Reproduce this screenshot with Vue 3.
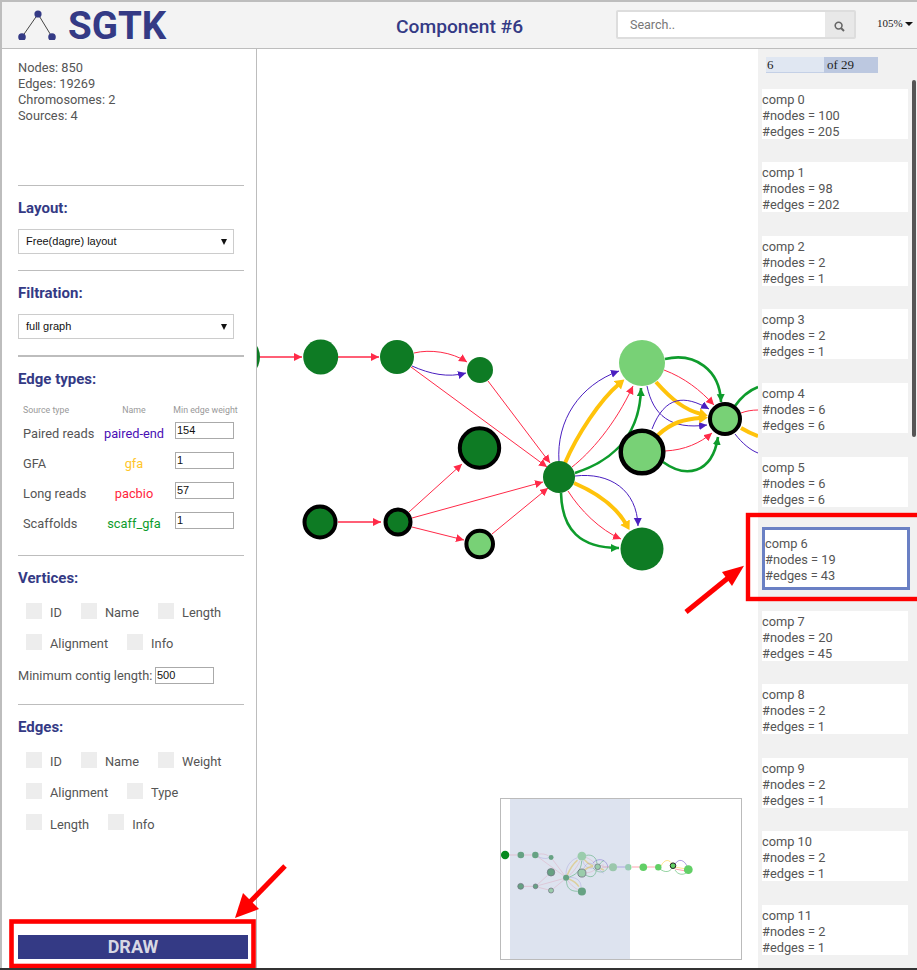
<script setup>
const RED = '#ff2a48', PUR = '#4a1fc0', YEL = '#ffc30b', GRN = '#0e9c2c'
const DARK = '#0e7b24', LIGHT = '#78d176'

const edges = [
  { d: 'M260 357L302 357', c: 'r', w: 1.3 },
  { d: 'M338 357L379 357', c: 'r', w: 1.3 },
  { d: 'M414 353C430 349 452 352 467 362', c: 'r', w: 1 },
  { d: 'M412 366C430 374 448 378 466 373', c: 'p', w: 1 },
  { d: 'M411 367L547 467', c: 'r', w: 1 },
  { d: 'M488 381L550 463', c: 'r', w: 1 },
  { d: 'M338 522L381 522', c: 'r', w: 1.3 },
  { d: 'M409 512L462 464', c: 'r', w: 1 },
  { d: 'M412 518L543 482', c: 'r', w: 1 },
  { d: 'M412 527L464 540', c: 'r', w: 1 },
  { d: 'M492 534L548 488', c: 'r', w: 1 },
  { d: 'M559 462C556 420 580 385 619 371', c: 'p', w: 1 },
  { d: 'M565 463C577 435 600 400 619 384', c: 'y', w: 4 },
  { d: 'M572 467C590 453 615 425 633 386', c: 'r', w: 1 },
  { d: 'M575 473C600 465 640 445 641 388', c: 'g', w: 2.6 },
  { d: 'M575 476C610 472 637 490 638 526', c: 'p', w: 1 },
  { d: 'M574 483C595 492 615 505 626 524', c: 'y', w: 4 },
  { d: 'M568 491C580 510 600 530 621 539', c: 'r', w: 1 },
  { d: 'M561 493C562 530 580 548 619 548', c: 'g', w: 2.6 },
  { d: 'M665 359C695 352 720 370 721 402', c: 'g', w: 2.6 },
  { d: 'M664 370C685 378 700 390 714 405', c: 'r', w: 1 },
  { d: 'M656 382C672 400 685 410 701 414', c: 'y', w: 4 },
  { d: 'M647 386C653 415 670 430 707 425', c: 'p', w: 1 },
  { d: 'M652 429C665 395 685 395 709 409', c: 'p', w: 1 },
  { d: 'M658 435C672 422 685 419 701 418', c: 'y', w: 4 },
  { d: 'M665 451C685 450 700 443 712 433', c: 'r', w: 1 },
  { d: 'M663 462C685 478 712 475 718 437', c: 'g', w: 2.6 },
  { d: 'M735 406C742 396 750 390 758 387', c: 'g', w: 2.6, open: true },
  { d: 'M741 413C746 411 752 410 758 410', c: 'r', w: 1, open: true },
  { d: 'M741 428C746 431 752 434 758 436', c: 'y', w: 4, open: true },
  { d: 'M735 434C742 443 750 450 758 453', c: 'p', w: 1, open: true }
]
const colors = { r: RED, p: PUR, y: YEL, g: GRN }

const nodes = [
  { x: 238, y: 357, r: 22, f: DARK },
  { x: 320.7, y: 357, r: 17.5, f: DARK },
  { x: 397, y: 357, r: 17, f: DARK },
  { x: 480, y: 370, r: 13, f: DARK },
  { x: 479.5, y: 448, r: 19.7, f: DARK, s: 4 },
  { x: 320, y: 522, r: 15.5, f: DARK, s: 4 },
  { x: 398, y: 522, r: 12.5, f: DARK, s: 4 },
  { x: 479.7, y: 544, r: 13.3, f: LIGHT, s: 4 },
  { x: 559, y: 477, r: 16, f: DARK },
  { x: 642, y: 363, r: 23, f: LIGHT },
  { x: 642, y: 452, r: 21.3, f: LIGHT, s: 4.5 },
  { x: 642, y: 549, r: 21.5, f: DARK },
  { x: 725, y: 419, r: 15, f: LIGHT, s: 4 }
]

const miniExtra = [
  { x: 613, y: 867.3, r: 4, f: '#8fd08f' },
  { x: 628.3, y: 867.3, r: 3.2, f: '#8fd8a0' },
  { x: 643.3, y: 867.3, r: 3.8, f: '#62cf66' },
  { x: 658.3, y: 867.3, r: 3.2, f: '#62cf66' },
  { x: 673, y: 865.7, r: 2.8, f: '#62cf66', s: 1 },
  { x: 688.3, y: 869.7, r: 4.4, f: '#62cf66' }
]
const miniLinks = [
  { d: 'M602 867L613 867', c: RED },
  { d: 'M617 867L628 867', c: PUR },
  { d: 'M632 867L643 867', c: RED },
  { d: 'M647 867L658 867', c: RED },
  { d: 'M661 866C665 858 670 860 672 864', c: YEL },
  { d: 'M660 869C665 873 670 872 672 868', c: GRN },
  { d: 'M675 864C679 858 684 860 687 866', c: PUR },
  { d: 'M675 867L686 869', c: YEL },
  { d: 'M675 869L686 871', c: RED },
  { d: 'M675 870C678 875 683 875 686 873', c: GRN },
  { d: 'M608 867C606 858 597 858 593 863', c: PUR },
  { d: 'M608 867C605 874 597 873 593 868', c: GRN }
]

const comps = [
  [0, 100, 205], [1, 98, 202], [2, 2, 1], [3, 2, 1], [4, 6, 6], [5, 6, 6],
  [6, 19, 43], [7, 20, 45], [8, 2, 1], [9, 2, 1], [10, 2, 1], [11, 2, 1]
].map(([id, n, e]) => ({ id, n, e }))

const sources = [
  { type: 'Paired reads', name: 'paired-end', cls: 'pe', v: '154' },
  { type: 'GFA', name: 'gfa', cls: 'gf', v: '1' },
  { type: 'Long reads', name: 'pacbio', cls: 'pb', v: '57' },
  { type: 'Scaffolds', name: 'scaff_gfa', cls: 'sc', v: '1' }
]
const vertexRows = [['ID', 'Name', 'Length'], ['Alignment', 'Info']]
const edgeRows = [['ID', 'Name', 'Weight'], ['Alignment', 'Type'], ['Length', 'Info']]
</script>

<template>
  <div class="page">
    <header class="top">
      <svg class="logo" width="38" height="30" viewBox="18 11 38 30">
        <path d="M22 38L38 15L52 38" fill="none" stroke="#444" stroke-width="1" />
        <circle cx="38" cy="15" r="3.6" fill="#343a85" />
        <circle cx="22" cy="38" r="3.8" fill="#343a85" />
        <circle cx="52" cy="38" r="3.8" fill="#343a85" />
      </svg>
      <div class="brand">SGTK</div>
      <div class="title">Component #6</div>
      <div class="search">
        <span class="ph">Search..</span>
        <span class="sbtn">
          <svg width="11" height="11" viewBox="0 0 11 11">
            <circle cx="4.6" cy="4.6" r="3.4" fill="none" stroke="#666" stroke-width="1.6" />
            <path d="M7 7L10 10" stroke="#666" stroke-width="1.9" />
          </svg>
        </span>
      </div>
      <div class="zoom">105%<i class="caret"></i></div>
    </header>

    <div class="body">
      <aside class="side">
        <div class="stats">
          <div>Nodes: 850</div>
          <div>Edges: 19269</div>
          <div>Chromosomes: 2</div>
          <div>Sources: 4</div>
        </div>
        <hr class="rule first" />
        <h3>Layout:</h3>
        <div class="sel">Free(dagre) layout</div>
        <hr class="rule" />
        <h3>Filtration:</h3>
        <div class="sel">full graph</div>
        <hr class="rule thick" />
        <h3>Edge types:</h3>
        <div class="types">
          <span class="th">Source type</span>
          <span class="th mid">Name</span>
          <span class="th last">Min edge weight</span>
          <template v-for="s in sources" :key="s.name">
            <span class="cell txt">{{ s.type }}</span>
            <span class="cell txt mid" :class="s.cls">{{ s.name }}</span>
            <span class="cell inp"><span class="box">{{ s.v }}</span></span>
          </template>
        </div>
        <hr class="rule after-types" />
        <h3>Vertices:</h3>
        <div class="checks">
          <div v-for="(row, i) in vertexRows" :key="i" class="crow">
            <label v-for="t in row" :key="t" class="chk"><i></i>{{ t }}</label>
          </div>
        </div>
        <div class="minlen"><span class="minlbl">Minimum contig length:</span><span class="box">500</span></div>
        <hr class="rule after-min" />
        <h3>Edges:</h3>
        <div class="checks">
          <div v-for="(row, i) in edgeRows" :key="i" class="crow">
            <label v-for="t in row" :key="t" class="chk"><i></i>{{ t }}</label>
          </div>
        </div>
        <button class="draw">DRAW</button>
      </aside>

      <main class="canvas">
        <svg class="graph" width="501" height="919" viewBox="257 49 501 919">
          <defs>
            <marker id="ar" markerUnits="userSpaceOnUse" markerWidth="10" markerHeight="10" refX="8" refY="4" orient="auto"><path d="M0 0L8 4L0 8Z" :fill="RED" /></marker>
            <marker id="ap" markerUnits="userSpaceOnUse" markerWidth="10" markerHeight="10" refX="8" refY="4" orient="auto"><path d="M0 0L8 4L0 8Z" :fill="PUR" /></marker>
            <marker id="ag" markerUnits="userSpaceOnUse" markerWidth="10" markerHeight="10" refX="8" refY="4" orient="auto"><path d="M0 0L8 4L0 8Z" :fill="GRN" /></marker>
            <marker id="ay" markerUnits="userSpaceOnUse" markerWidth="12" markerHeight="12" refX="2" refY="5.5" orient="auto"><path d="M0 0L9 5.5L0 11Z" :fill="YEL" /></marker>
          </defs>
          <path v-for="(e, i) in edges" :key="i" :d="e.d" fill="none" :stroke="colors[e.c]" :stroke-width="e.w" :marker-end="e.open ? null : `url(#a${e.c})`" />
          <circle v-for="(n, i) in nodes" :key="i" :cx="n.x" :cy="n.y" :r="n.r" :fill="n.f" :stroke="n.s ? '#000' : 'none'" :stroke-width="n.s || 0" />
        </svg>

        <svg class="mini" width="242" height="162" viewBox="500 798 242 162">
          <g transform="translate(520.7 855) scale(.19) translate(-320 -357)">
            <path v-for="(e, i) in edges" :key="i" :d="e.d" fill="none" :stroke="colors[e.c]" :stroke-width="e.w * 2" opacity=".55" />
            <circle v-for="(n, i) in nodes" :key="i" :cx="n.x" :cy="n.y" :r="n.r" :fill="i === 0 ? '#078a1f' : n.f" :stroke="n.s ? '#222' : 'none'" :stroke-width="n.s ? n.s : 0" :opacity="i === 0 ? 1 : .82" />
          </g>
          <path v-for="(l, i) in miniLinks" :key="'l' + i" :d="l.d" fill="none" :stroke="l.c" stroke-width=".8" opacity=".55" />
          <circle v-for="(n, i) in miniExtra" :key="'x' + i" :cx="n.x" :cy="n.y" :r="n.r" :fill="n.f" :stroke="n.s ? '#222' : 'none'" :stroke-width="n.s || 0" />
          <rect x="510" y="798" width="120" height="162" fill="#aab9d8" opacity=".4" />
          <rect x="500.5" y="798.5" width="241" height="161" fill="none" stroke="#bbb" stroke-width="1" />
        </svg>
      </main>

      <section class="panel">
        <div class="pager"><span class="pg-in">6</span><span class="pg-of">of 29</span></div>
        <div class="list">
          <div v-for="c in comps" :key="c.id" class="comp" :class="{ on: c.id === 6 }">
            <div>comp {{ c.id }}</div>
            <div>#nodes = {{ c.n }}</div>
            <div>#edges = {{ c.e }}</div>
          </div>
        </div>
        <div class="thumb"></div>
      </section>
    </div>

    <svg class="notes" width="917" height="970" viewBox="0 0 917 970">
      <rect x="11.5" y="921.5" width="242" height="44.5" fill="none" stroke="#ff0000" stroke-width="4.6" />
      <rect x="748" y="515" width="200" height="84" fill="none" stroke="#ff0000" stroke-width="4.4" />
      <path d="M285 866L246 906" stroke="#ff0000" stroke-width="5" />
      <path d="M235 918L243 893L259 909Z" fill="#ff0000" />
      <path d="M686 612L728 578" stroke="#ff0000" stroke-width="5" />
      <path d="M744 565.7L722 572L732 586Z" fill="#ff0000" />
    </svg>
  </div>
</template>

<style>
html, body { margin: 0; background: #fff; }
</style>

<style scoped>
.page {
  position: relative;
  box-sizing: border-box;
  width: 917px;
  height: 970px;
  overflow: hidden;
  display: flex;
  flex-direction: column;
  border-top: 2px solid #bdbdbd;
  border-bottom: 2px solid #333;
  font-family: Roboto, sans-serif;
  font-size: 12.8px;
  line-height: 16px;
  color: #555;
  background: #fff;
}
.top {
  flex: none;
  height: 46px;
  display: flex;
  align-items: center;
  background: #f3f3f3;
  border-bottom: 1px solid #bdbdbd;
  border-left: 2px solid #bdbdbd;
  padding-left: 16px;
}
.logo { flex: none; margin-top: -1px; }
.brand {
  margin-left: 12px;
  width: 328px;
  font-size: 38.5px;
  font-weight: 700;
  line-height: 46px;
  color: #343a85;
  margin-top: 1px;
}
.title {
  width: 220px;
  font-size: 19.2px;
  font-weight: 500;
  color: #343a85;
  margin-top: 3px;
}
.search {
  box-sizing: border-box;
  width: 240px;
  height: 29px;
  border: 2px solid #ddd;
  border-radius: 2px;
  background: #fff;
  display: flex;
  align-items: center;
  justify-content: space-between;
  margin-top: -1px;
}
.ph { margin-left: 12px; color: #777; font-size: 12.5px; }
.sbtn {
  width: 29px;
  height: 25px;
  background: #e8e8e8;
  display: flex;
  align-items: center;
  justify-content: center;
}
.sbtn svg { margin-top: 3px; }
.zoom {
  margin-left: 21px;
  font-family: "Liberation Serif", serif;
  font-size: 11px;
  color: #222;
  display: flex;
  align-items: center;
  margin-top: -4px;
}
.caret {
  margin-left: 2px;
  margin-top: 1px;
  border-left: 4.5px solid transparent;
  border-right: 4.5px solid transparent;
  border-top: 4.5px solid #111;
}
.body { flex: 1; display: flex; min-height: 0; }
.side {
  flex: none;
  box-sizing: border-box;
  width: 257px;
  display: flex;
  flex-direction: column;
  border-left: 2px solid #bdbdbd;
  border-right: 1px solid #bdbdbd;
  padding: 11px 0 9px 16px;
}
.rule { width: 226px; margin: 16px 0 0; border: 0; border-top: 1px solid #bdbdbd; flex: none; }
.rule.first { margin-top: 61px; }
.rule.thick { border-top-width: 2px; }
.rule.after-types { margin-top: 17px; }
.rule.after-min { margin-top: 20px; }
h3 {
  margin: 13px 0 0;
  font-size: 15px;
  font-weight: 700;
  line-height: 18px;
  color: #343a85;
}
.sel {
  position: relative;
  box-sizing: border-box;
  width: 216px;
  height: 25px;
  margin-top: 12px;
  padding-left: 7px;
  border: 1px solid #ccc;
  font-family: "Liberation Sans", sans-serif;
  font-size: 11px;
  line-height: 23px;
  color: #111;
}
.sel::after {
  content: "";
  position: absolute;
  right: 6px;
  top: 9px;
  border-left: 3.5px solid transparent;
  border-right: 3.5px solid transparent;
  border-top: 6px solid #111;
}
.types {
  margin: 16px 0 0 5px;
  display: grid;
  grid-template-columns: 81px 60px 74px;
  grid-auto-rows: 30px;
  grid-template-rows: 14px;
}
.th { font-size: 8.8px; line-height: 12px; color: #999; white-space: nowrap; }
.th.mid { text-align: center; }
.th.last { padding-left: 9px; text-align: center; }
.cell { display: flex; align-items: center; white-space: nowrap; }
.cell.txt { padding-top: 2px; }
.cell.mid { justify-content: center; }
.pe { color: #4a0fb5; }
.gf { color: #ffc62a; }
.pb { color: #ff1f3d; }
.sc { color: #0e9c2c; }
.cell.inp { padding-left: 11px; padding-bottom: 5px; }
.box {
  box-sizing: border-box;
  display: inline-block;
  width: 59px;
  height: 17px;
  padding-left: 1px;
  border: 1px solid #aaa;
  font-family: "Liberation Sans", sans-serif;
  font-size: 11px;
  line-height: 14px;
  color: #111;
}
.checks { margin: 16px 0 0 8px; display: flex; flex-direction: column; gap: 15px; }
.crow { display: flex; height: 16px; }
.chk { display: flex; align-items: flex-start; margin-right: 19px; line-height: 20px; }
.crow:nth-child(3) .chk { line-height: 22px; }
.chk i { width: 16px; height: 16px; margin-right: 8px; background: #ededed; }
.minlen { margin-top: 17px; display: flex; align-items: center; line-height: 15px; }
.minlbl { width: 137px; white-space: nowrap; }
.draw {
  margin-top: auto;
  width: 230px;
  height: 24px;
  border: 0;
  padding: 0 0 2px;
  background: #343a85;
  color: #d8d8e4;
  font-family: Roboto, sans-serif;
  font-size: 18px;
  font-weight: 700;
}
.canvas { position: relative; flex: none; width: 501px; overflow: hidden; }
.graph { display: block; }
.mini { position: absolute; left: 243px; top: 749px; display: block; background: #fff; }
.panel {
  position: relative;
  flex: 1;
  min-width: 0;
  background: #f1f1f1;
  overflow: hidden;
}
.pager {
  display: flex;
  margin: 8px 0 0 8px;
  height: 16px;
  font-family: "Liberation Serif", serif;
  font-size: 13px;
  line-height: 16px;
  color: #222;
}
.pg-in { width: 58px; padding-left: 1px; box-sizing: border-box; background: #e0e7f2; border-bottom: 1px solid #c4d0e6; }
.pg-of { width: 54px; padding-left: 3px; box-sizing: border-box; background: #bcc8e0; }
.list { margin: 15.7px 0 0 4px; }
.comp {
  box-sizing: border-box;
  width: 146px;
  height: 50px;
  margin-bottom: 23.6px;
  padding-top: 3px;
  background: #fff;
}
.comp.on {
  width: 148px;
  height: 63px;
  margin-top: -3.6px;
  margin-bottom: 21px;
  padding: 6px 0 0 0;
  border: 3px solid #6a80c4;
}
.thumb {
  position: absolute;
  left: 154px;
  top: 31px;
  width: 4px;
  height: 357px;
  border-radius: 2px;
  background: #555;
}
.notes { position: absolute; left: 0; top: -2px; pointer-events: none; }
</style>
